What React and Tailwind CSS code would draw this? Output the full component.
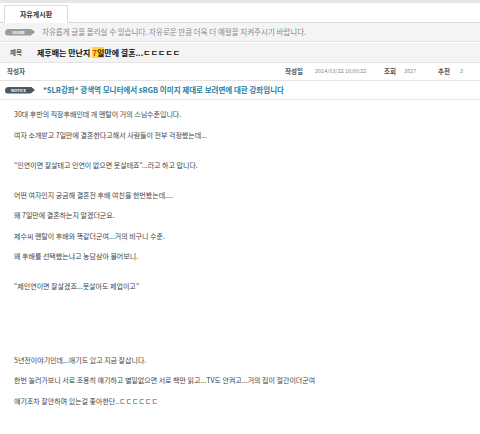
import React from "react";

const lines = [
  { t: "30대 후반의 직장후배인데 개 멘탈이 거의 스님수준입니다.", mt: "mt-[7px]" },
  { t: "여자 소개받고 7일만에 결혼한다고해서 사람들이 전부 걱정했는데...", mt: "mt-[7px]" },
  { t: "\u201C인연이면 잘살테고 인연이 없으면 못살테죠\u201D...라고 하고 맙니다.", mt: "mt-[16px]" },
  { t: "어떤 여자인지 궁금해 결혼전 후배 여친을 한번봤는데....", mt: "mt-[16px]" },
  { t: "왜 7일만에 결혼하는지 알겠더군요.", mt: "mt-[6px]" },
  { t: "제수씨 멘탈이 후배와 똑같더군여...거의 비구니 수준.", mt: "mt-[7px]" },
  { t: "왜 후배를 선택했는냐고 농담삼아 물어보니.", mt: "mt-[6px]" },
  { t: "\u201C제인연이면 잘살겠죠...못살아도 제업이고\u201D", mt: "mt-[16px]" },
  { t: "5년전이야기인데...애기도 있고 지금 잘삽니다.", mt: "mt-[60px]" },
  { t: "한번 놀러가보니 서로 조용히 얘기하고 별일없으면 서로 책만 읽고...TV도 안켜고...거의 집이 절간이더군여", mt: "mt-[6px]" },
  { t: "얘기조차 잘안하며 있는걸 좋아한단..ㄷㄷㄷㄷㄷㄷ", mt: "mt-[7px]" },
];

export default function App() {
  return (
    <div
      className="w-[480px] h-[434px] bg-white overflow-hidden flex flex-col"
      style={{ fontFamily: '"Noto Sans CJK KR", "Noto Sans", sans-serif' }}
    >
      <div className="h-[3px] bg-[#e6e6e6]" />
      {/* tab bar */}
      <div className="h-[20px] flex items-end pl-[4px] border-b border-[#dcdcdc]">
        <div className="w-[64px] h-[18px] bg-white border border-b-0 border-[#dcdcdc] flex items-center justify-center text-[7px] font-bold text-[#333] -mb-px">
          자유게시판
        </div>
      </div>
      {/* guide row */}
      <div className="h-[19px] bg-[#f4f4f4] border-b border-[#e4e4e4] flex items-center pl-[5px]">
        <div className="w-[30px] h-[7px] bg-[#9c9c9c] rounded-l-full [clip-path:polygon(0_0,86%_0,100%_50%,86%_100%,0_100%)] flex items-center justify-center text-[4px] leading-none text-white font-bold pr-[3px]">
          GUIDE
        </div>
        <span className="ml-[7px] text-[7.5px] text-[#8a8a8a] whitespace-nowrap">
          자유롭게 글을 올리실 수 있습니다. 자유로운 만큼 더욱 더 예절을 지켜주시기 바랍니다.
        </span>
      </div>
      {/* title row */}
      <div className="mt-[1px] h-[20px] bg-[#f4f4f4] border-b border-[#e4e4e4] flex items-center">
        <span className="pl-[10px] w-[37px] text-[6.5px] font-bold text-[#555]">제목</span>
        <span className="text-[8px] font-bold text-[#111] whitespace-nowrap">
          제후배는 만난지 <span className="bg-[#ffd92e]"><span className="text-[#e03c1e]">7</span>일</span>만에 결혼...ㄷㄷㄷㄷㄷ
        </span>
      </div>
      {/* author row */}
      <div className="h-[18px] border-b border-[#e4e4e4] flex items-center whitespace-nowrap">
        <span className="w-[285px] pl-[7px] text-[6.5px] font-bold text-[#555]">작성자</span>
        <span className="w-[30px] text-[6.5px] font-bold text-[#555]">작성일</span>
        <span className="w-[69px] text-[5.5px] text-[#888]">2014/03/22 16:00:22</span>
        <span className="w-[20px] text-[6.5px] font-bold text-[#555]">조회</span>
        <span className="w-[34px] text-[5.5px] text-[#888]">3827</span>
        <span className="w-[22px] text-[6.5px] font-bold text-[#555]">추천</span>
        <span className="text-[5.5px] text-[#888]">3</span>
      </div>
      {/* notice row */}
      <div className="h-[19px] border-b border-[#e8e8e8] flex items-center pl-[5px]">
        <div className="w-[30px] h-[7px] bg-[#4a5869] rounded-l-full [clip-path:polygon(0_0,86%_0,100%_50%,86%_100%,0_100%)] flex items-center justify-center text-[4px] leading-none text-white font-bold pr-[3px]">
          NOTICE
        </div>
        <span className="ml-[8px] text-[7.5px] font-bold text-[#2f7d9e] whitespace-nowrap">
          *SLR강좌* 광색역 모니터에서 sRGB 이미지 제대로 보려면에 대한 강좌입니다
        </span>
      </div>
      {/* body */}
      <div className="flex flex-col pl-[14px]">
        {lines.map((l, i) => (
          <div key={i} className={`${l.mt} h-[14px] leading-[14px] text-[7px] text-[#444] whitespace-nowrap`}>
            {l.t}
          </div>
        ))}
      </div>
    </div>
  );
}
